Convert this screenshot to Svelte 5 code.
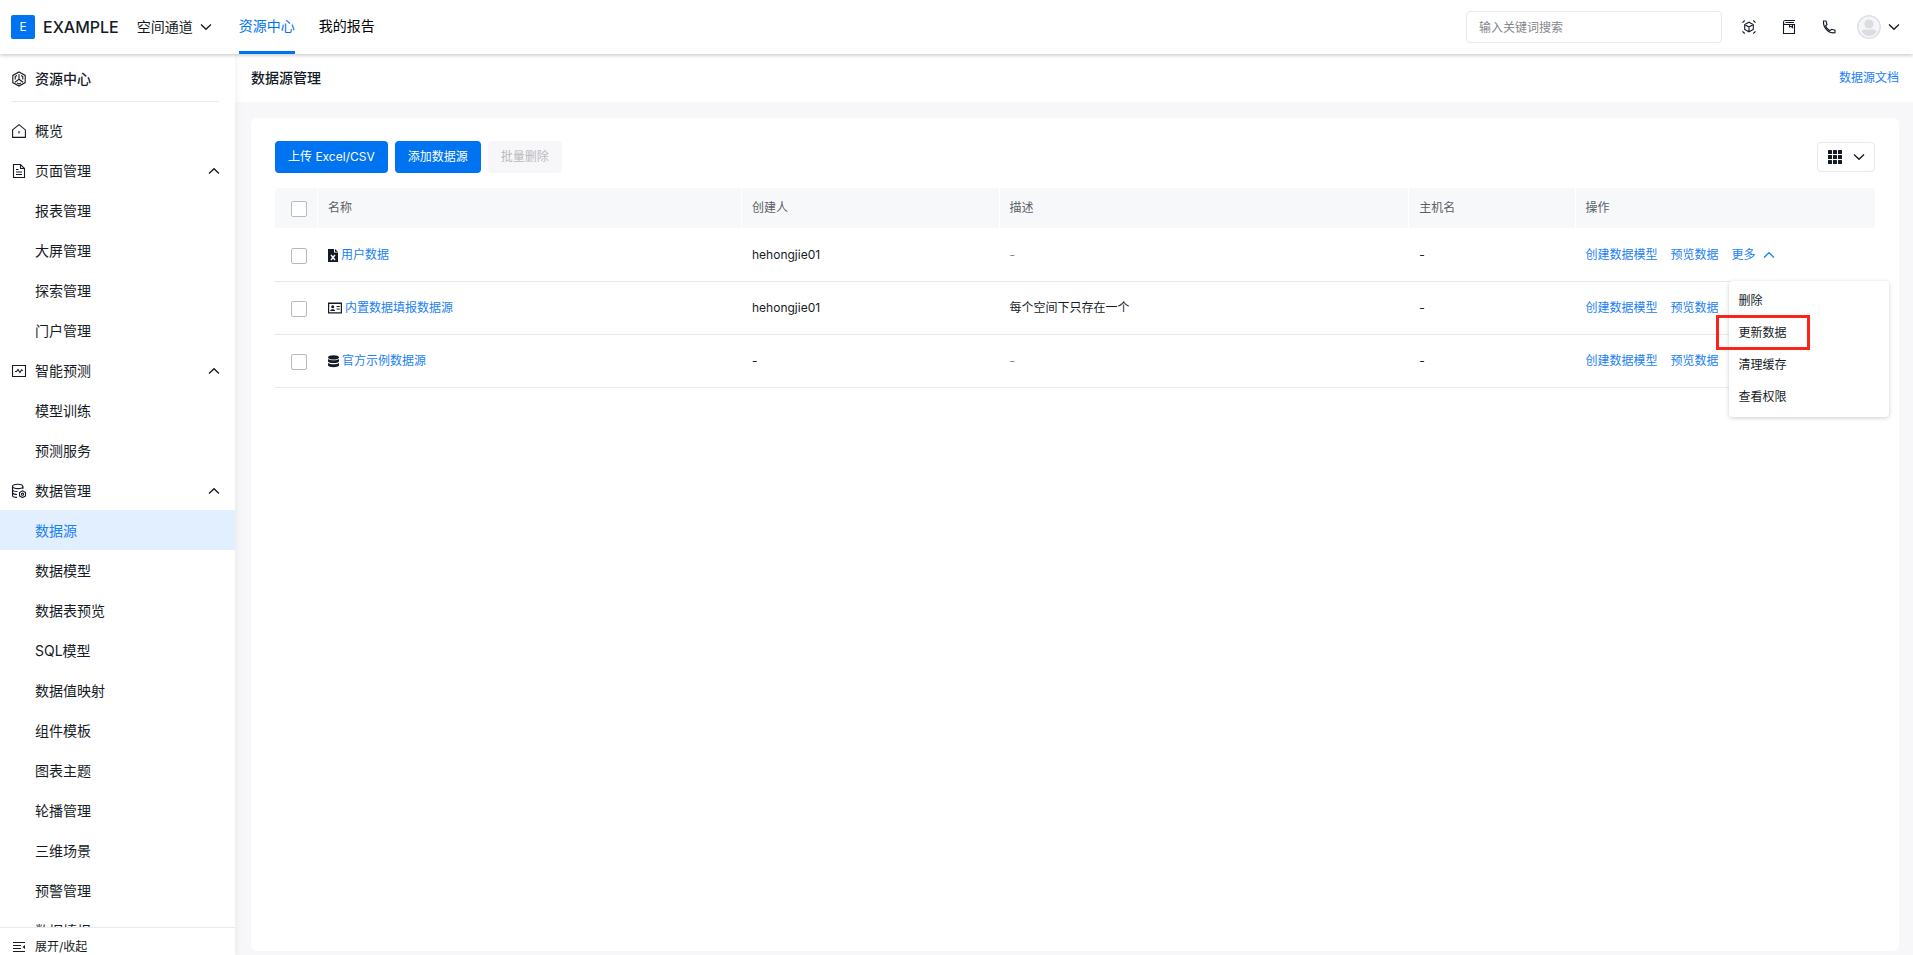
<!-- App.svelte - Resource center: data source management -->
<script lang="ts">
  interface MenuItem {
    name: string;
    icon?: string;
    group?: boolean;
  }

  interface Source {
    name: string;
    icon: string;
    creator: string;
    desc: string;
    host: string;
    editable?: boolean;
  }

  const menu: MenuItem[] = [
    { name: '概览', icon: 'home' },
    { name: '页面管理', icon: 'page', group: true },
    { name: '报表管理' },
    { name: '大屏管理' },
    { name: '探索管理' },
    { name: '门户管理' },
    { name: '智能预测', icon: 'pulse', group: true },
    { name: '模型训练' },
    { name: '预测服务' },
    { name: '数据管理', icon: 'data', group: true },
    { name: '数据源' },
    { name: '数据模型' },
    { name: '数据表预览' },
    { name: 'SQL模型' },
    { name: '数据值映射' },
    { name: '组件模板' },
    { name: '图表主题' },
    { name: '轮播管理' },
    { name: '三维场景' },
    { name: '预警管理' },
    { name: '数据填报' }
  ];

  const sources: Source[] = [
    { name: '用户数据', icon: 'excel', creator: 'hehongjie01', desc: '', host: '-', editable: true },
    { name: '内置数据填报数据源', icon: 'card', creator: 'hehongjie01', desc: '每个空间下只存在一个', host: '-' },
    { name: '官方示例数据源', icon: 'database', creator: '-', desc: '', host: '-' }
  ];

  const actions = ['删除', '更新数据', '清理缓存', '查看权限'];

  let current = $state('数据源');
  let openRow = $state(0);
  let keyword = $state('');
</script>

{#snippet chevron(up: boolean)}
  <svg class="chevron" class:up viewBox="0 0 12 12" width="12" height="12" aria-hidden="true">
    <path d="M1 3.5 L6 8.3 L11 3.5" fill="none" stroke="currentColor" stroke-width="1.3" />
  </svg>
{/snippet}

{#snippet icon(name: string)}
  {#if name === 'cube'}
    <svg class="icon" viewBox="0 0 16 16" width="16" height="16" aria-hidden="true">
      <path d="M8 1 L14.2 4.4 V11.6 L8 15 L1.8 11.6 V4.4 Z" />
      <path d="M8 3.2 V8.3 L4 11.2 M8 8.3 L12 11.2 M6 4.5 L4.2 5.6 V8.6 M10 4.5 L11.8 5.6 V8.6 M6 12 L8 13 L10 12" />
    </svg>
  {:else if name === 'home'}
    <svg class="icon" viewBox="0 0 16 16" width="16" height="16" aria-hidden="true">
      <path d="M1.6 6.9 L8 1.6 L14.4 6.9 V14.4 H1.6 Z" />
      <path d="M8 8 V10.5" />
    </svg>
  {:else if name === 'page'}
    <svg class="icon" viewBox="0 0 16 16" width="16" height="16" aria-hidden="true">
      <path d="M2.5 1.5 H9.5 L13.5 5.5 V14.5 H2.5 Z M9.5 1.5 V5.5 H13.5 M5 6.5 H7.5 M5 9 H11 M5 11.5 H11" />
    </svg>
  {:else if name === 'pulse'}
    <svg class="icon" viewBox="0 0 16 16" width="16" height="16" aria-hidden="true">
      <path d="M1.5 2.5 H14.5 V13.5 H1.5 Z M4 8.5 H5.5 L7 6.5 L9 9.5 L10.5 7 L12 7.5" />
    </svg>
  {:else if name === 'data'}
    <svg class="icon" viewBox="0 0 16 16" width="16" height="16" aria-hidden="true">
      <ellipse cx="6.7" cy="3.4" rx="5.2" ry="2.2" />
      <path d="M1.5 3.4 V12.2 C1.5 13.6 3.5 14.4 6 14.4 M11.9 3.4 V6 M1.5 6.6 C2 8 4 8.5 6.5 8.5 M1.5 9.8 C2 11 4 11.5 6 11.5" />
      <path d="M11.5 7.8 L14.5 9.5 V12.9 L11.5 14.6 L8.5 12.9 V9.5 Z" />
      <circle cx="11.5" cy="11.2" r="1.1" />
    </svg>
  {:else if name === 'fold'}
    <svg class="icon" viewBox="0 0 16 16" width="16" height="16" aria-hidden="true">
      <path d="M2 3.5 H14 M2 6.5 H10 M2 9.5 H10 M2 12.5 H14" />
      <path class="solid" d="M14 6 V10 L11.5 8 Z" />
    </svg>
  {:else if name === 'scan'}
    <svg class="icon" viewBox="0 0 16 16" width="16" height="16" aria-hidden="true">
      <path d="M1.5 3.7 L3.7 1.5 M12.3 1.5 L14.5 3.7 M14.5 12.3 L12.3 14.5 M3.7 14.5 L1.5 12.3" />
      <path d="M8 3.2 L12.3 5.6 V10.4 L8 12.8 L3.7 10.4 V5.6 Z M3.7 5.6 L8 8 L12.3 5.6 M8 8 V12.8" />
    </svg>
  {:else if name === 'book'}
    <svg class="icon" viewBox="0 0 16 16" width="16" height="16" aria-hidden="true">
      <path d="M14 1.5 H4 C1.9 1.5 1.9 5.5 4 5.5 H13.5 V14.5 H2.5 V3.5 M4.5 3.5 H13 M8.5 5.5 V8 L10 7.3 L11.5 8.5 V5.5" />
    </svg>
  {:else if name === 'phone'}
    <svg class="icon" viewBox="0 0 16 16" width="16" height="16" aria-hidden="true">
      <path d="M2.5 2 H5 L6 5.5 L4.5 7 C5.3 9 7 10.8 9.2 11.7 L10.5 10.3 L14 11.2 V13.8 C7.5 14.5 2 9 2.5 2 Z" />
    </svg>
  {:else if name === 'excel'}
    <svg class="glyph" viewBox="0 0 10 13" width="10" height="13" aria-hidden="true">
      <path d="M0 0 H6 V3.5 H10 V13 H0 Z M7 0 L10 2.8 H7 Z" />
      <path class="cut" d="M3 6 L7 11 M7 6 L3 11" />
    </svg>
  {:else if name === 'card'}
    <svg class="glyph" viewBox="0 0 14 12" width="14" height="12" aria-hidden="true">
      <path fill-rule="evenodd" d="M0 0.5 H14 V11.5 H0 Z M1.2 2 V10.3 H12.8 V2 Z" />
      <circle cx="4.7" cy="4.7" r="1.5" />
      <path d="M2.2 9 C2.2 6.5 7.2 6.5 7.2 9 Z M8.5 4 H11.8 V5 H8.5 Z M8.5 6.5 H11.8 V7.5 H8.5 Z" />
    </svg>
  {:else if name === 'database'}
    <svg class="glyph" viewBox="0 0 11 13" width="11" height="13" aria-hidden="true">
      <ellipse cx="5.5" cy="2.4" rx="5.5" ry="2.2" />
      <path d="M0 4 C2 5.8 9 5.8 11 4 V6.4 C10 8.6 1 8.6 0 6.4 Z M0 8 C2 9.8 9 9.8 11 8 V10.6 C10 12.8 1 12.8 0 10.6 Z" />
    </svg>
  {/if}
{/snippet}

<div class="app">
  <header class="topbar">
    <div class="logo">E</div>
    <span class="brand">EXAMPLE</span>
    <button class="space">空间通道 {@render chevron(false)}</button>
    <nav class="tabs">
      <a class="active" href="#center">资源中心</a>
      <a href="#report">我的报告</a>
    </nav>
    <input class="search" type="text" placeholder="输入关键词搜索" aria-label="搜索" bind:value={keyword} />
    <div class="tools">
      <button aria-label="场景">{@render icon('scan')}</button>
      <button aria-label="文档">{@render icon('book')}</button>
      <button aria-label="电话">{@render icon('phone')}</button>
    </div>
    <button class="user" aria-label="用户">
      <svg viewBox="0 0 24 24" width="24" height="24" aria-hidden="true">
        <circle cx="12" cy="12" r="11.2" fill="#f5f6f8" stroke="#dfe0e4" stroke-width="1.5" />
        <circle cx="12" cy="9" r="4.6" fill="#dcdde1" />
        <path d="M4.5 16 C7 13.8 9 14.8 12 14.8 C15 14.8 17 13.8 19.5 16 C18 19.5 15 21 12 21 C9 21 6 19.5 4.5 16 Z" fill="#dcdde1" />
      </svg>
      {@render chevron(false)}
    </button>
  </header>

  <div class="body">
    <aside class="sidebar">
      <div class="side-title">{@render icon('cube')}<span>资源中心</span></div>
      <nav class="menu">
        {#each menu as item}
          <a
            href="#menu"
            class="menu-item"
            class:selected={item.name === current}
            onclick={() => (current = item.name)}
          >
            <span class="menu-icon">{#if item.icon}{@render icon(item.icon)}{/if}</span>
            <span class="menu-name">{item.name}</span>
            {#if item.group}{@render chevron(true)}{/if}
          </a>
        {/each}
      </nav>
      <button class="fold">{@render icon('fold')}<span>展开/收起</span></button>
    </aside>

    <main class="main">
      <div class="page-head">
        <h1>数据源管理</h1>
        <a href="#doc">数据源文档</a>
      </div>

      <section class="card">
        <div class="toolbar">
          <button class="btn primary">上传 Excel/CSV</button>
          <button class="btn primary">添加数据源</button>
          <button class="btn" disabled>批量删除</button>
          <button class="view" aria-label="视图">
            <svg viewBox="0 0 14 14" width="14" height="14" aria-hidden="true">
              {#each [0, 5, 10] as y}
                {#each [0, 5, 10] as x}
                  <rect {x} {y} width="4" height="4" rx="0.5" fill="currentColor" />
                {/each}
              {/each}
            </svg>
            {@render chevron(false)}
          </button>
        </div>

        <table>
          <thead>
            <tr>
              <th class="check"><input type="checkbox" aria-label="全选" /></th>
              <th class="name">名称</th>
              <th class="creator">创建人</th>
              <th class="desc">描述</th>
              <th class="host">主机名</th>
              <th>操作</th>
            </tr>
          </thead>
          <tbody>
            {#each sources as source, i}
              <tr>
                <td class="check"><input type="checkbox" aria-label={source.name} /></td>
                <td>
                  <div class="source">{@render icon(source.icon)}<a href="#source">{source.name}</a></div>
                </td>
                <td>{source.creator}</td>
                <td class:empty={!source.desc}>{source.desc || '-'}</td>
                <td>{source.host}</td>
                <td>
                  <div class="ops">
                    <a href="#model">创建数据模型</a>
                    <a href="#preview">预览数据</a>
                    {#if source.editable}
                      <div class="more">
                        <button onclick={() => (openRow = openRow === i ? -1 : i)}>
                          更多 {@render chevron(openRow === i)}
                        </button>
                        {#if openRow === i}
                          <div class="dropdown">
                            {#each actions as action}
                              <button class:marked={action === '更新数据'}>{action}</button>
                            {/each}
                          </div>
                        {/if}
                      </div>
                    {/if}
                  </div>
                </td>
              </tr>
            {/each}
          </tbody>
        </table>
      </section>
    </main>
  </div>
</div>

<style>
  :global(body) {
    margin: 0;
    background: #f7f7fa;
  }

  .app {
    --blue: #0073f0;
    --link: #1a80f5;
    --text: #151b26;
    --line: #e8e9eb;
    display: flex;
    flex-direction: column;
    height: 100vh;
    overflow: hidden;
    color: var(--text);
    font-family: Inter, 'Noto Sans CJK SC', sans-serif;
    font-size: 12px;
    line-height: 20px;
  }

  a {
    color: var(--link);
    text-decoration: none;
  }

  button {
    padding: 0;
    border: 0;
    background: none;
    color: inherit;
    font: inherit;
    cursor: pointer;
  }

  svg {
    display: block;
    flex: none;
  }

  .icon {
    fill: none;
    stroke: currentColor;
    stroke-width: 1.1;
  }

  .icon .solid {
    fill: currentColor;
    stroke: none;
  }

  .glyph {
    fill: currentColor;
  }

  .glyph .cut {
    stroke: #fff;
    stroke-width: 1.4;
  }

  .chevron.up {
    transform: rotate(180deg);
  }

  /* Top bar */
  .topbar {
    position: relative;
    z-index: 2;
    display: flex;
    flex: none;
    align-items: center;
    height: 54px;
    padding: 0 13px 0 11px;
    box-sizing: border-box;
    background: #fff;
    box-shadow: 0 1px 4px rgba(0, 0, 0, 0.25);
    font-size: 14px;
  }

  .logo {
    width: 24px;
    height: 24px;
    margin-right: 8px;
    border-radius: 2px;
    background: var(--blue);
    color: #fff;
    font-size: 12px;
    line-height: 24px;
    text-align: center;
  }

  .brand {
    font-size: 16px;
    font-weight: 500;
  }

  .space {
    display: flex;
    align-items: center;
    gap: 7px;
    margin-left: 18px;
  }

  .tabs {
    display: flex;
    align-self: stretch;
    gap: 24px;
    margin-left: 27px;
  }

  .tabs a {
    border-bottom: 3px solid transparent;
    color: #000;
    line-height: 51px;
  }

  .tabs .active {
    border-color: var(--blue);
    color: var(--blue);
  }

  .search {
    width: 256px;
    height: 32px;
    margin-left: auto;
    padding: 0 12px;
    box-sizing: border-box;
    border: 1px solid var(--line);
    border-radius: 4px;
    color: inherit;
    font: inherit;
    font-size: 12px;
  }

  .search::placeholder {
    color: #84868c;
  }

  .tools {
    display: flex;
    gap: 24px;
    margin: 0 20px 0 19px;
  }

  .user {
    display: flex;
    align-items: center;
    gap: 7px;
  }

  .body {
    display: flex;
    flex: 1;
    min-height: 0;
  }

  /* Sidebar */
  .sidebar {
    z-index: 1;
    display: flex;
    flex: none;
    flex-direction: column;
    width: 235px;
    background: #fff;
    box-shadow: 0 0 8px rgba(0, 0, 0, 0.08);
    font-size: 14px;
  }

  .side-title {
    display: flex;
    flex: none;
    align-items: center;
    gap: 8px;
    height: 48px;
    margin: 0 16px 8px 11px;
    padding-top: 2px;
    box-sizing: border-box;
    border-bottom: 1px solid var(--line);
    font-weight: 500;
  }

  .menu {
    flex: 1;
    min-height: 0;
    overflow: hidden;
  }

  .menu-item {
    display: flex;
    align-items: center;
    gap: 8px;
    height: 40px;
    padding: 2px 15px 0 11px;
    box-sizing: border-box;
    color: var(--text);
  }

  .menu-item.selected {
    background: #e1efff;
    color: var(--link);
  }

  .menu-icon {
    width: 16px;
  }

  .menu-name {
    flex: 1;
  }

  .fold {
    display: flex;
    flex: none;
    align-items: flex-start;
    gap: 8px;
    height: 28px;
    padding: 11px 11px 0;
    box-sizing: border-box;
    overflow: hidden;
    border-top: 1px solid var(--line);
    font-size: 12px;
    line-height: 16px;
  }

  /* Page */
  .main {
    display: flex;
    flex: 1;
    flex-direction: column;
    min-width: 0;
  }

  .page-head {
    display: flex;
    align-items: center;
    justify-content: space-between;
    height: 48px;
    padding: 0 14px 0 16px;
    background: #fff;
  }

  .page-head h1 {
    margin: 0;
    font-size: 14px;
    font-weight: 500;
  }

  .card {
    flex: 1;
    margin: 16px 14px 4px 16px;
    padding: 23px 24px;
    border-radius: 6px;
    background: #fff;
  }

  .toolbar {
    display: flex;
    align-items: center;
    gap: 7px;
    margin-bottom: 15px;
  }

  .btn {
    height: 32px;
    padding: 0 13px;
    border-radius: 4px;
    background: #f7f7f9;
  }

  .btn.primary {
    background: var(--blue);
    color: #fff;
  }

  .btn:disabled {
    color: #b8babf;
    cursor: default;
  }

  .view {
    display: flex;
    align-items: center;
    gap: 11px;
    height: 30px;
    margin-left: auto;
    padding: 0 9px 0 10px;
    border: 1px solid var(--line);
    border-radius: 4px;
    box-sizing: border-box;
  }

  /* Table */
  table {
    width: 100%;
    border-spacing: 0;
    table-layout: fixed;
  }

  th,
  td {
    padding: 0 10px;
    border-bottom: 1px solid var(--line);
    text-align: left;
  }

  th {
    height: 41px;
    box-sizing: border-box;
    border-right: 1px solid #fff;
    border-bottom-color: #fff;
    background: #f7f8fa;
    color: #5c5f66;
    font-weight: 400;
  }

  th:first-child {
    border-top-left-radius: 4px;
  }

  th:last-child {
    border-right: 0;
    border-top-right-radius: 4px;
  }

  td {
    height: 52px;
  }

  .check {
    width: 43px;
    padding: 0 0 0 16px;
    box-sizing: border-box;
  }

  .name {
    width: 26.5%;
  }

  .creator {
    width: 16.1%;
  }

  .desc {
    width: 25.6%;
  }

  .host {
    width: 10.4%;
  }

  input[type='checkbox'] {
    display: block;
    width: 16px;
    height: 16px;
    margin: 2px 0 0;
    border: 1px solid #b8babf;
    border-radius: 2px;
    background: #fff;
    appearance: none;
  }

  input[type='checkbox']:checked {
    border-color: var(--blue);
    background: var(--blue);
  }

  .empty {
    color: #84868c;
  }

  .source {
    display: flex;
    align-items: center;
    gap: 3px;
  }

  .ops {
    display: flex;
    gap: 13px;
  }

  .more {
    position: relative;
  }

  .more > button {
    display: flex;
    align-items: center;
    gap: 7px;
    color: var(--link);
  }

  .dropdown {
    position: absolute;
    top: 36px;
    left: -3px;
    z-index: 3;
    display: flex;
    flex-direction: column;
    width: 160px;
    padding: 4px 0;
    border-radius: 4px;
    background: #fff;
    box-shadow: 0 1px 4px rgba(0, 0, 0, 0.2);
  }

  .dropdown button {
    position: relative;
    height: 32px;
    padding: 0 10px;
    text-align: left;
  }

  /* Red frame round the highlighted action */
  .marked::after {
    content: '';
    position: absolute;
    inset: -2px 79px -1px -13px;
    border: 3px solid #fb2419;
  }
</style>
